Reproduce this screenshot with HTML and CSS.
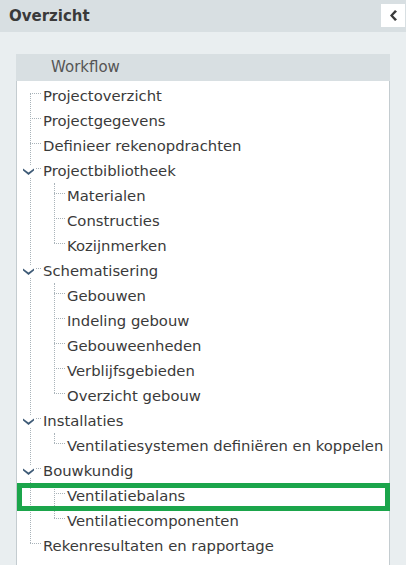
FILE: index.html
```html
<!DOCTYPE html>
<html lang="nl">
<head>
<meta charset="utf-8">
<title>Overzicht</title>
<link rel="stylesheet" href="styles.css">
</head>
<body>
<div class="panel">
  <div class="header">
    <h1 class="title">Overzicht</h1>
    <button class="collapse" aria-label="Inklappen">
      <svg width="7" height="11" viewBox="0 0 7 11"><polygon points="5,0 7,1.5 3,5.5 7,9.5 5,11 0,5.5" fill="#3a3a3a"/></svg>
    </button>
  </div>
  <div class="content">
    <div class="workflow">
      <div class="wf-head">Workflow</div>
      <ul class="tree level1">
        <li class="node"><span class="label">Projectoverzicht</span></li>
        <li class="node"><span class="label">Projectgegevens</span></li>
        <li class="node"><span class="label">Definieer rekenopdrachten</span></li>
        <li class="node open">
          <svg class="toggle" width="13" height="11" viewBox="0 0 13 11"><polygon points="1,2.5 6.5,6.5 12,2.5 12,4.5 6.5,9 1,4.5" fill="#3f5b77"/></svg>
          <span class="label">Projectbibliotheek</span>
          <ul class="tree level2">
            <li class="node"><span class="label">Materialen</span></li>
            <li class="node"><span class="label">Constructies</span></li>
            <li class="node"><span class="label">Kozijnmerken</span></li>
          </ul>
        </li>
        <li class="node open">
          <svg class="toggle" width="13" height="11" viewBox="0 0 13 11"><polygon points="1,2.5 6.5,6.5 12,2.5 12,4.5 6.5,9 1,4.5" fill="#3f5b77"/></svg>
          <span class="label">Schematisering</span>
          <ul class="tree level2">
            <li class="node"><span class="label">Gebouwen</span></li>
            <li class="node"><span class="label">Indeling gebouw</span></li>
            <li class="node"><span class="label">Gebouweenheden</span></li>
            <li class="node"><span class="label">Verblijfsgebieden</span></li>
            <li class="node"><span class="label">Overzicht gebouw</span></li>
          </ul>
        </li>
        <li class="node open">
          <svg class="toggle" width="13" height="11" viewBox="0 0 13 11"><polygon points="1,2.5 6.5,6.5 12,2.5 12,4.5 6.5,9 1,4.5" fill="#3f5b77"/></svg>
          <span class="label">Installaties</span>
          <ul class="tree level2">
            <li class="node"><span class="label">Ventilatiesystemen definiëren en koppelen</span></li>
          </ul>
        </li>
        <li class="node open">
          <svg class="toggle" width="13" height="11" viewBox="0 0 13 11"><polygon points="1,2.5 6.5,6.5 12,2.5 12,4.5 6.5,9 1,4.5" fill="#3f5b77"/></svg>
          <span class="label">Bouwkundig</span>
          <ul class="tree level2">
            <li class="node selected"><span class="label">Ventilatiebalans</span><span class="highlight"></span></li>
            <li class="node"><span class="label">Ventilatiecomponenten</span></li>
          </ul>
        </li>
        <li class="node"><span class="label">Rekenresultaten en rapportage</span></li>
      </ul>
    </div>
  </div>
</div>
</body>
</html>
```

FILE: styles.css
```css
html, body {
  margin: 0;
  padding: 0;
}
body {
  width: 406px;
  height: 565px;
  overflow: hidden;
  background: #e9eef0;
  font-family: "DejaVu Sans", "Liberation Sans", sans-serif;
  color: #3a3a3a;
}
.header {
  height: 32px;
  background: #d8dfe2;
  display: flex;
  align-items: center;
  justify-content: space-between;
  padding: 0 1px 0 9px;
}
.title {
  margin: 0;
  font-size: 15px;
  font-weight: bold;
  line-height: 1;
  color: #3a3a3a;
}
.collapse {
  width: 24px;
  height: 23px;
  margin-top: -1px;
  background: #fff;
  border: none;
  padding: 0;
  display: flex;
  align-items: center;
  justify-content: center;
}
.content {
  padding: 22px 16px 0 16px;
}
.wf-head {
  height: 27px;
  line-height: 27px;
  background: #d8dfe2;
  padding-left: 35px;
  font-size: 15px;
  color: #555;
}
.tree {
  list-style: none;
  margin: 0;
  padding: 0;
  position: relative;
}
.level1 {
  background: #fff;
  border-left: 1px solid #c4ccd0;
  border-right: 1px solid #c4ccd0;
  padding: 2px 0 10px 0;
}
.node {
  position: relative;
}
.label {
  display: block;
  box-sizing: border-box;
  height: 25px;
  padding-top: 1px;
  line-height: 24px;
  font-size: 14.8px;
  white-space: nowrap;
  color: #3a3a3a;
}
.level1 > .node > .label {
  padding-left: 26px;
}
.level2 > .node > .label {
  padding-left: 50px;
}
.level1::before {
  content: "";
  position: absolute;
  left: 13px;
  top: 12px;
  bottom: 25px;
  border-left: 1px dotted #a9b3b9;
}
.level1 > .node::before {
  content: "";
  position: absolute;
  left: 13px;
  top: 10px;
  width: 11px;
  border-top: 1px dotted #a9b3b9;
}
.level2::before {
  content: "";
  position: absolute;
  left: 37px;
  top: 0;
  bottom: 15px;
  border-left: 1px dotted #a9b3b9;
}
.level2 > .node::before {
  content: "";
  position: absolute;
  left: 37px;
  top: 10px;
  width: 11px;
  border-top: 1px dotted #a9b3b9;
}
.toggle {
  position: absolute;
  left: 5px;
  top: 8px;
  background: #fff;
  z-index: 1;
}
.highlight {
  position: absolute;
  left: 0;
  right: -1px;
  top: 0;
  height: 28px;
  border: 5px solid #1ba54b;
  box-sizing: border-box;
}
```
